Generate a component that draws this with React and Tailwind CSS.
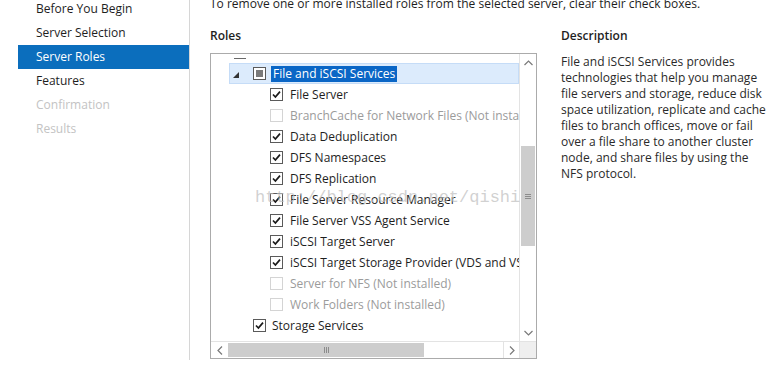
import React from 'react'

const NAV = [
  { label: 'Before You Begin' },
  { label: 'Server Selection' },
  { label: 'Server Roles', active: true },
  { label: 'Features' },
  { label: 'Confirmation', disabled: true },
  { label: 'Results', disabled: true },
]

const CHILDREN = [
  { label: 'File Server', checked: true },
  { label: 'BranchCache for Network Files (Not installed)', disabled: true },
  { label: 'Data Deduplication', checked: true },
  { label: 'DFS Namespaces', checked: true },
  { label: 'DFS Replication', checked: true },
  { label: 'File Server Resource Manager', checked: true },
  { label: 'File Server VSS Agent Service', checked: true },
  { label: 'iSCSI Target Server', checked: true },
  { label: 'iSCSI Target Storage Provider (VDS and VSS hardware providers)', checked: true },
  { label: 'Server for NFS (Not installed)', disabled: true },
  { label: 'Work Folders (Not installed)', disabled: true },
]

function Checkbox({ checked, disabled, mixed }) {
  return (
    <span
      className={`relative block w-[13px] h-[13px] shrink-0 border bg-white ${
        disabled ? 'border-[#d4d4d4]' : 'border-[#5a5a5a]'
      }`}
    >
      {checked && (
        <svg className="absolute inset-0" width="11" height="11" viewBox="0 0 11 11">
          <path d="M2 5.5 L4.4 8 L9 2.6" fill="none" stroke="#1a1a1a" strokeWidth="1.7" />
        </svg>
      )}
      {mixed && <span className="absolute inset-[2px] bg-[#7a7a7a]" />}
    </span>
  )
}

export default function App() {
  const font = { fontFamily: '"Open Sans", "Noto Sans", sans-serif' }
  return (
    <div className="relative w-[773px] h-[372px] bg-white flex overflow-hidden text-[#1e1e1e]" style={font}>
      {/* Left nav */}
      <nav className="w-[190px] mt-[-3px] pl-[18px] text-[12px]">
        {NAV.map((n) => (
          <div
            key={n.label}
            className={`h-[24px] pl-[18px] flex items-center ${
              n.active ? 'bg-[#0b6ebd] text-white' : n.disabled ? 'text-[#c3c3c3]' : 'text-[#1e1e1e]'
            }`}
          >
            {n.label}
          </div>
        ))}
      </nav>
      <div className="w-px h-[360px] bg-[#d6d6d6]" />

      {/* Main */}
      <div className="pl-[20px] mt-[-4px] flex-1 text-[12px]">
        <p className="leading-[16px] whitespace-nowrap">
          To remove one or more installed roles from the selected server, clear their check boxes.
        </p>
        <div className="flex mt-[16px]">
          {/* Roles */}
          <div className="w-[327px]">
            <h2 className="font-semibold leading-[16px] mb-[9px]">Roles</h2>
            <div className="border border-[#ababab] h-[306px] w-[327px] flex flex-col">
              <div className="flex h-[287px]">
                <div className="flex-1 overflow-hidden">
                  <div className="mt-[-12px]">
                    {/* partial row (scrolled off) */}
                    <div className="h-[21px] pl-[23px] pt-[16px]">
                      <span className="block w-[12px] h-px bg-[#6a6a6a]" />
                    </div>
                    {/* File and iSCSI Services */}
                    <div className="h-[21px] ml-[18px] bg-[#dcebfc] border border-[#c5dcf7] flex items-center">
                      <svg width="6" height="6" viewBox="0 0 6 6" className="ml-[3px] mt-[2px]">
                        <polygon points="6,0 6,6 0,6" fill="#333" />
                      </svg>
                      <span className="ml-[14px]">
                        <Checkbox mixed />
                      </span>
                      <span className="ml-[5px] px-[2px] bg-[#0a66c6] text-white leading-[16px] whitespace-nowrap">
                        File and iSCSI Services
                      </span>
                    </div>
                    {CHILDREN.map((c) => (
                      <div key={c.label} className="h-[21px] flex items-center pl-[59px] whitespace-nowrap">
                        <Checkbox checked={c.checked} disabled={c.disabled} />
                        <span className={`ml-[7px] ${c.disabled ? 'text-[#9b9b9b]' : ''}`}>{c.label}</span>
                      </div>
                    ))}
                    <div className="h-[21px] flex items-center pl-[42px] whitespace-nowrap">
                      <Checkbox checked />
                      <span className="ml-[6px]">Storage Services</span>
                    </div>
                  </div>
                </div>
                {/* vertical scrollbar */}
                <div className="w-[17px] border-l border-[#e3e3e3] flex flex-col bg-white">
                  <div className="h-[17px] flex items-center justify-center">
                    <svg width="9" height="6" viewBox="0 0 9 6">
                      <path d="M0.5 5 L4.5 1 L8.5 5" fill="none" stroke="#7a7a7a" strokeWidth="1.2" />
                    </svg>
                  </div>
                  <div className="h-[75px]" />
                  <div className="h-[100px] mx-[1px] bg-[#cdcdcd] flex items-center justify-center">
                    <div className="flex flex-col gap-[1px]">
                      <span className="block w-[6px] h-px bg-[#8c8c8c]" />
                      <span className="block w-[6px] h-px bg-[#8c8c8c]" />
                      <span className="block w-[6px] h-px bg-[#8c8c8c]" />
                    </div>
                  </div>
                  <div className="flex-1" />
                  <div className="h-[17px] flex items-center justify-center">
                    <svg width="9" height="6" viewBox="0 0 9 6">
                      <path d="M0.5 1 L4.5 5 L8.5 1" fill="none" stroke="#7a7a7a" strokeWidth="1.2" />
                    </svg>
                  </div>
                </div>
              </div>
              {/* horizontal scrollbar */}
              <div className="flex h-[17px] border-t border-[#e3e3e3]">
                <div className="flex-1 flex">
                  <div className="w-[17px] flex items-center justify-center">
                    <svg width="6" height="9" viewBox="0 0 6 9">
                      <path d="M5 0.5 L1 4.5 L5 8.5" fill="none" stroke="#7a7a7a" strokeWidth="1.2" />
                    </svg>
                  </div>
                  <div className="w-[196px] my-[1px] bg-[#cdcdcd] flex items-center justify-center gap-[1px]">
                    <span className="block w-px h-[6px] bg-[#8c8c8c]" />
                    <span className="block w-px h-[6px] bg-[#8c8c8c]" />
                    <span className="block w-px h-[6px] bg-[#8c8c8c]" />
                  </div>
                  <div className="flex-1" />
                  <div className="w-[16px] border-l border-[#e3e3e3] flex items-center justify-center">
                    <svg width="6" height="9" viewBox="0 0 6 9">
                      <path d="M1 0.5 L5 4.5 L1 8.5" fill="none" stroke="#7a7a7a" strokeWidth="1.2" />
                    </svg>
                  </div>
                </div>
                <div className="w-[17px] bg-[#efefef] border-l border-[#e3e3e3]" />
              </div>
            </div>
          </div>

          {/* Description */}
          <div className="ml-[24px] w-[212px]">
            <h2 className="font-semibold leading-[16px] mb-[10px]">Description</h2>
            <p className="leading-[16px] text-[#2a2a2a]">
              File and iSCSI Services provides technologies that help you manage file servers and storage,
              reduce disk space utilization, replicate and cache files to branch offices, move or fail over a
              file share to another cluster node, and share files by using the NFS protocol.
            </p>
          </div>
        </div>
      </div>

      {/* watermark */}
      <div
        className="absolute left-[255px] top-[187px] text-[17px] leading-[22px] text-[#bdbdbd]/70 whitespace-nowrap pointer-events-none"
        style={{ fontFamily: '"Liberation Mono", monospace' }}
      >
        http://blog.csdn.net/qishi
      </div>
    </div>
  )
}
